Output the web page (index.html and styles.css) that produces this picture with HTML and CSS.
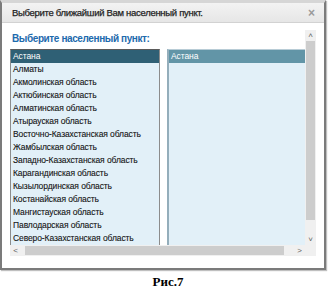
FILE: index.html
```html
<!DOCTYPE html>
<html>
<head>
<meta charset="utf-8">
<link rel="stylesheet" href="styles.css">
</head>
<body>
<div class="dialog">
  <div class="header">
    <span class="title">Выберите ближайший Вам населенный пункт.</span>
    <span class="close">×</span>
  </div>
  <div class="body">
    <div class="scroll">
      <div class="content">
        <div class="heading">Выберите населенный пункт:</div>
        <div class="lists">
          <div class="list left">
            <div class="item sel">Астана</div>
            <div class="item">Алматы</div>
            <div class="item">Акмолинская область</div>
            <div class="item">Актюбинская область</div>
            <div class="item">Алматинская область</div>
            <div class="item">Атырауская область</div>
            <div class="item">Восточно-Казахстанская область</div>
            <div class="item">Жамбылская область</div>
            <div class="item">Западно-Казахстанская область</div>
            <div class="item">Карагандинская область</div>
            <div class="item">Кызылординская область</div>
            <div class="item">Костанайская область</div>
            <div class="item">Мангистауская область</div>
            <div class="item">Павлодарская область</div>
            <div class="item">Северо-Казахстанская область</div>
          </div>
          <div class="list right">
            <div class="item sel2">Астана</div>
          </div>
        </div>
      </div>
      <div class="vbar">
        <span class="arrow">&#x2C4;</span>
        <div class="vthumb"></div>
        <span class="arrow">&#x2C5;</span>
      </div>
      <div class="hbar">
        <span class="arrow">&lt;</span>
        <div class="hthumb"></div>
        <span class="arrow">&gt;</span>
      </div>
      <div class="corner"></div>
    </div>
  </div>
</div>
<div class="caption">Рис.7</div>
</body>
</html>
```
FILE: styles.css
```css
html, body {
  margin: 0;
  padding: 0;
  background: #ffffff;
}
body {
  width: 328px;
  height: 290px;
  overflow: hidden;
  font-family: "Liberation Sans", Arial, sans-serif;
}
.dialog {
  box-sizing: border-box;
  width: 326px;
  height: 270px;
  border: 2px solid #7b7b7b;
  border-top: 3px solid #d6d6d6;
  background: #ffffff;
  display: flex;
  flex-direction: column;
  box-shadow: 1px 1px 1px rgba(0,0,0,0.25);
}
.header {
  height: 19px;
  flex: none;
  background: linear-gradient(#f3f3f3, #e6e6e6);
  border-bottom: 1px solid #d2d2d2;
  display: flex;
  align-items: center;
  justify-content: space-between;
  padding: 0 9px 0 10px;
}
.title {
  font-size: 9.5px;
  color: #1e1e1e;
  letter-spacing: -0.3px;
  -webkit-text-stroke: 0.25px #1e1e1e;
}
.close {
  font-size: 12px;
  color: #9a9a9a;
  font-weight: bold;
}
.body {
  padding: 7px 8px 0 8px;
}
.scroll {
  width: 306px;
  height: 226px;
  display: grid;
  grid-template-columns: 1fr 11px;
  grid-template-rows: 1fr 11px;
  overflow: hidden;
}
.content {
  overflow: hidden;
  min-width: 0;
  min-height: 0;
}
.heading {
  font-size: 10px;
  font-weight: bold;
  color: #1d6aad;
  padding: 3px 0 0 2px;
  height: 17px;
  box-sizing: border-box;
  letter-spacing: -0.4px;
}
.lists {
  display: flex;
  gap: 7px;
  margin-top: 2px;
}
.list {
  background: #e2f0f8;
  flex: none;
}
.left {
  width: 150px;
  box-sizing: border-box;
  border: 1px solid #8c8c8c;
  border-top-color: #5a5a5a;
}
.right {
  width: 140px;
  height: 200px;
  box-sizing: border-box;
  border-left: 2px solid #94aebb;
  border-top: 1px solid #b8ccd6;
}
.item {
  height: 13px;
  line-height: 13px;
  font-size: 8.5px;
  letter-spacing: -0.1px;
  color: #141414;
  -webkit-text-stroke: 0.1px #141414;
  padding-left: 2px;
  white-space: nowrap;
}
.sel {
  background: #2f6075;
  color: #ffffff;
  -webkit-text-stroke: 0;
}
.sel2 {
  background: #6295a7;
  color: #ffffff;
  -webkit-text-stroke: 0;
}
.vbar {
  background: #f0f0f0;
  display: flex;
  flex-direction: column;
  align-items: center;
}
.vthumb {
  width: 9px;
  flex: 1;
  background: #cdcdcd;
  margin: 0 0 14px 0;
}
.hbar {
  background: #f0f0f0;
  display: flex;
  align-items: center;
}
.hthumb {
  height: 9px;
  flex: 1;
  background: #cdcdcd;
  margin: 0 10px 0 4px;
}
.arrow {
  font-size: 8px;
  color: #606060;
  width: 11px;
  height: 11px;
  line-height: 11px;
  text-align: center;
  flex: none;
}
.corner {
  background: #f0f0f0;
}
.caption {
  text-align: center;
  font-family: "Liberation Serif", "Times New Roman", serif;
  font-weight: bold;
  font-size: 13px;
  color: #000;
  margin-top: 4px;
  padding-left: 8px;
}
```
